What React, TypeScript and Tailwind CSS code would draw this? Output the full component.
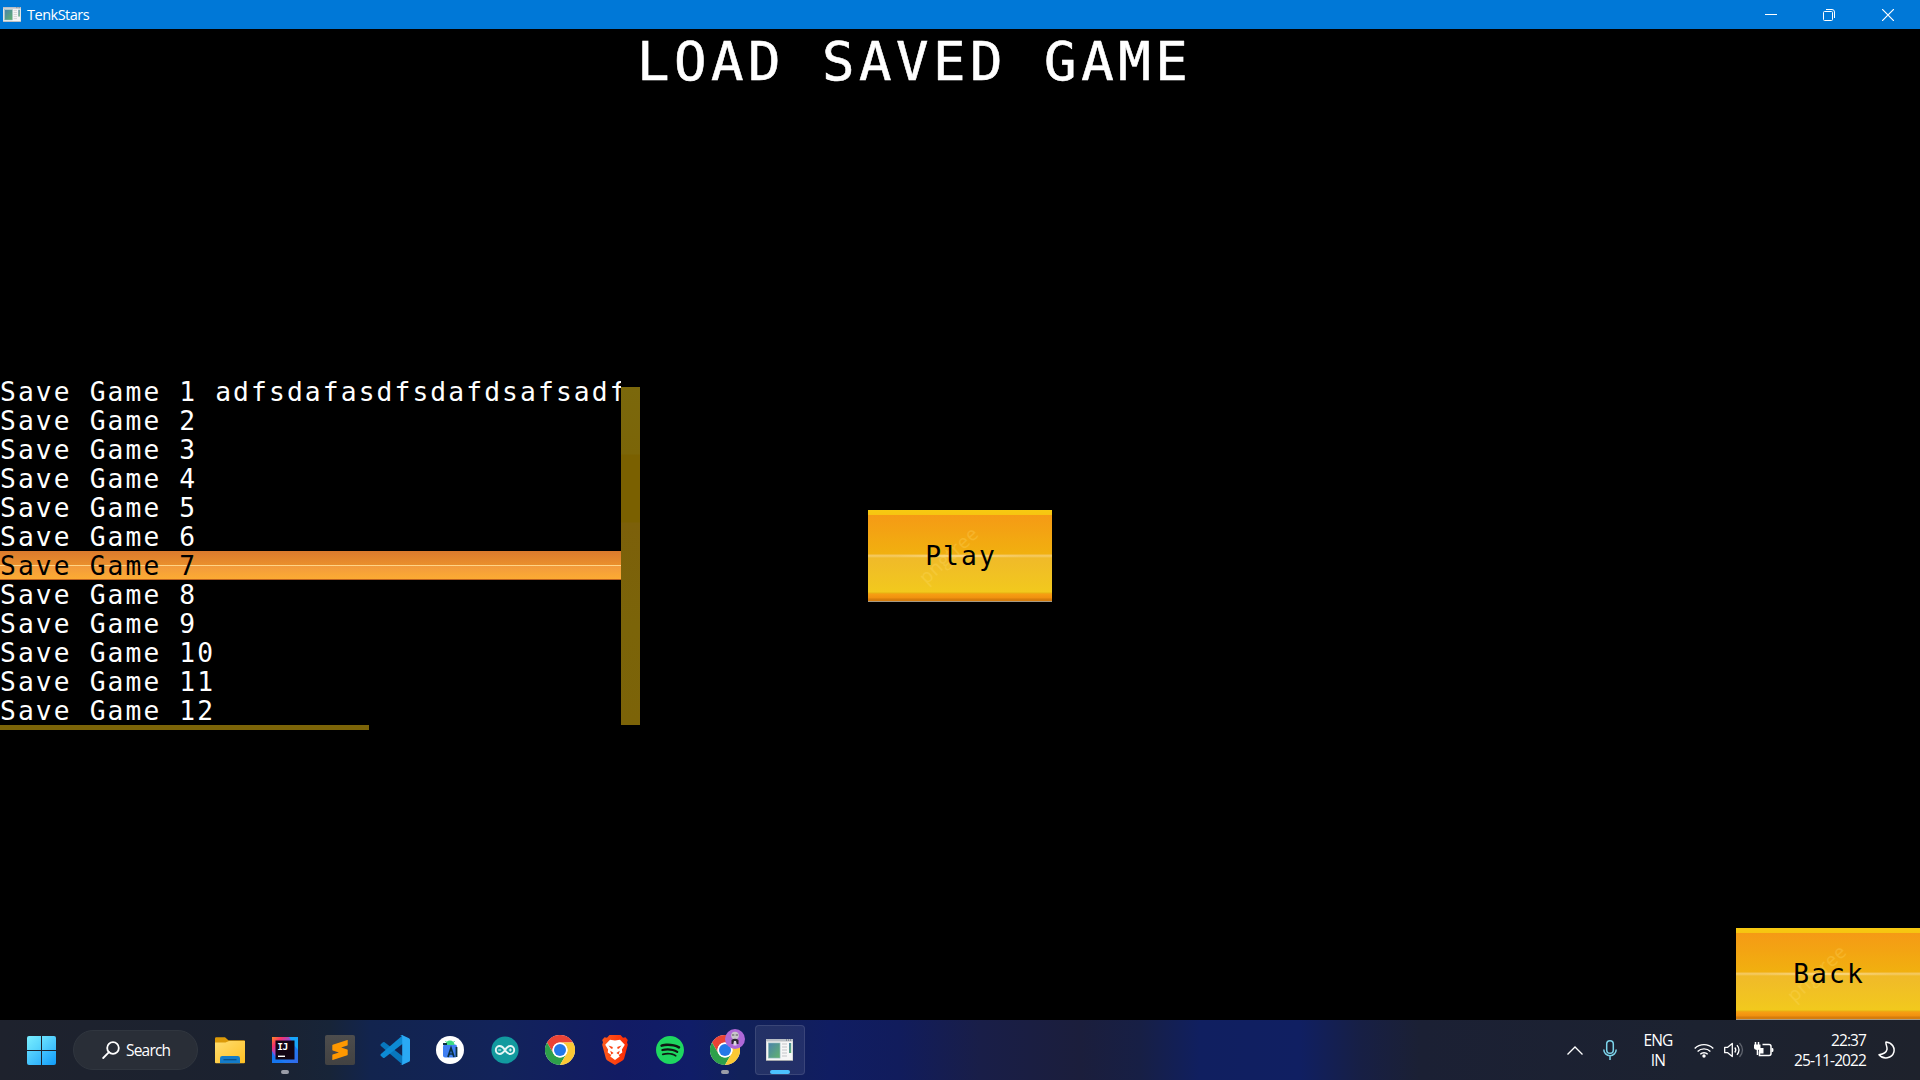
import React from "react";
import { SiSpotify, SiSublimetext } from "react-icons/si";

const saves = [
  "Save Game 1 adfsdafasdfsdafdsafsadfsdaf",
  ...Array.from({ length: 11 }, (_, i) => `Save Game ${i + 2}`),
];

const gameFont = "font-['DejaVu_Sans_Mono',monospace] whitespace-pre text-[26.3px] tracking-[2.1px]";

function GameButton({ label }: { label: string }) {
  return (
    <button className="relative flex h-[92px] w-[184px] items-center justify-center overflow-hidden bg-[linear-gradient(to_bottom,#f7ca12_0px,#f7c410_5px,#f59a15_5px,#f1b00f_44px,#f4c456_45px,#f5cb62_46px,#f0ba29_48px,#f2c91d_82px,#e8b212_83px,#f79e13_84px,#f0900f_88px,#d67d0c_89px,#d67d0c_91px,#a89a84_91px)]">
      <span className="absolute inset-x-0 top-[45px] h-[2px] bg-[linear-gradient(to_right,transparent_15%,#ffe3a2_50%,transparent_85%)] opacity-50" />
      <span className="absolute top-[34px] left-[44px] -rotate-[43deg] font-['Open_Sans',sans-serif] text-[19px] leading-[22px] tracking-[0.5px] text-[#ffdf70]/25">
        pngtree
      </span>
      <span className={`relative -top-[0.5px] left-px leading-[30px] text-black ${gameFont}`}>{label}</span>
    </button>
  );
}

function WindowIcon({ className }: { className: string }) {
  return (
    <svg viewBox="0 0 27 22" className={className} preserveAspectRatio="none">
      <defs>
        <linearGradient id="pane" x1="0" y1="0" x2="1" y2="1">
          <stop offset="0" stopColor="#4a82ad" />
          <stop offset="1" stopColor="#62b36c" />
        </linearGradient>
      </defs>
      <rect width="27" height="22" fill="#d9dadb" />
      <rect x="0" y="0" width="27" height="2" fill="#b9bfc6" />
      <path d="M20 1h1M22 1h1M24 1h1" stroke="#59606b" strokeWidth="1" />
      <rect x="1" y="3" width="25" height="18" fill="#f6f6f6" />
      <rect x="2.5" y="4" width="11.5" height="15" fill="url(#pane)" stroke="#8bb4b7" strokeWidth=".7" />
      <path d="M16 5h5M16 8h5M16 11h5M16 14h5M16 17h5" stroke="#d3d5d7" strokeWidth="1.4" />
      <rect x="23" y="4" width="2.2" height="10" fill="url(#pane)" />
      <path d="M0 21.5h27" stroke="#a3a7ab" />
    </svg>
  );
}

function Chrome() {
  return (
    <svg viewBox="0 0 48 48" className="size-[30px]">
      <circle cx="24" cy="24" r="24" fill="#fff" />
      <path d="M3.2 12A24 24 0 0 1 44.8 12H24a12 12 0 0 0-10.4 18z" fill="#ea4335" />
      <path d="M3.2 12A24 24 0 0 0 24 48L34.4 30a12 12 0 0 1-20.8 0z" fill="#2da04a" />
      <path d="M44.8 12A24 24 0 0 1 24 48l10.4-18A12 12 0 0 0 24 12z" fill="#fcc934" />
      <circle cx="24" cy="24" r="12" fill="#fff" />
      <circle cx="24" cy="24" r="9.6" fill="#2478e8" />
    </svg>
  );
}

function Slot({ children, running }: { children: React.ReactNode; running?: boolean }) {
  return (
    <div className="relative flex h-[60px] w-[55px] shrink-0 items-center justify-center">
      {children}
      {running && <span className="absolute bottom-[6px] left-1/2 h-1 w-2 -translate-x-1/2 rounded-full bg-[#9a9da8]" />}
    </div>
  );
}

function Taskbar() {
  return (
    <footer className="flex h-[60px] shrink-0 items-center bg-[linear-gradient(to_right,#1e222d_0px,#1b2230_260px,#172438_330px,#12244e_370px,#12235a_500px,#121b64_620px,#101d68_690px,#11215a_740px,#12205a_780px,#101d62_830px,#111c5c_900px,#191e48_980px,#1b1e3c_1080px,#171f45_1140px,#101f60_1200px,#101f62_1300px,#171f45_1360px,#1b2034_1420px,#1c2230_1700px,#1e222c_1920px)] font-['Open_Sans',sans-serif] text-white">
      <div className="ml-[27px] grid size-[29px] grid-cols-2 gap-px">
        <i className="rounded-tl-[2px] bg-[linear-gradient(135deg,#79eeff,#4fcffc)]" />
        <i className="rounded-tr-[2px] bg-[linear-gradient(135deg,#6be2ff,#38bafb)]" />
        <i className="rounded-bl-[2px] bg-[linear-gradient(135deg,#5bd6ff,#2eb0fb)]" />
        <i className="rounded-br-[2px] bg-[linear-gradient(135deg,#44c4ff,#119cf8)]" />
      </div>
      <div className="ml-[17px] flex h-10 w-[125px] items-center rounded-full border border-[#30363f] bg-[#292e37] pl-[28px]">
        <svg viewBox="0 0 18 18" className="size-[18px] fill-none stroke-white stroke-[1.8]">
          <circle cx="11" cy="7" r="5.8" />
          <path d="M7 11.2 1.2 17" strokeLinecap="round" />
        </svg>
        <span className="ml-[6px] text-[15.5px] leading-5 tracking-[-0.8px]">Search</span>
      </div>
      <div className="ml-1 flex">
        <Slot>
          <svg viewBox="0 0 30 27" className="h-[27px] w-[30px]">
            <defs>
              <linearGradient id="folder" x1="0" y1="0" x2="1" y2="1">
                <stop stopColor="#ffdd70" />
                <stop offset="1" stopColor="#ffc022" />
              </linearGradient>
            </defs>
            <path d="M0 1.5Q0 .3 1.2.3H10l3.4 2.9H29q1 0 1 1V9H0z" fill="#dc9a08" />
            <path d="M0 5.5h10.5L14 4h16v21.3q0 1-1 1H1q-1 0-1-1z" fill="url(#folder)" />
            <path d="M5 26.3v-5q0-2.3 2.3-2.3h15.4q2.3 0 2.3 2.3v5z" fill="#147cc9" />
            <path d="M8.5 22.7h13" stroke="#064d87" strokeWidth="1.2" />
          </svg>
        </Slot>
        <Slot running>
          <svg viewBox="0 0 26 26" className="size-[26px]">
            <defs>
              <linearGradient id="ij" x1="0" y1="0" x2="1" y2="1">
                <stop stopColor="#ff8a24" />
                <stop offset=".2" stopColor="#f8316b" />
                <stop offset=".4" stopColor="#8a51e0" />
                <stop offset=".6" stopColor="#1a7df6" />
                <stop offset="1" stopColor="#3469ea" />
              </linearGradient>
            </defs>
            <rect width="26" height="26" fill="url(#ij)" />
            <path d="M17 0h9v13l-4-5z" fill="#17a5fb" />
            <path d="M0 14v12h13l-9-5z" fill="#1676ef" />
            <rect x="3.5" y="3.5" width="19" height="19" fill="#120413" />
            <text x="5.2" y="13.2" fontSize="9.5" fontWeight="700" fill="#fff" fontFamily="DejaVu Sans Mono, monospace" letterSpacing="-.4">IJ</text>
            <path d="M6 19.3h7" stroke="#fff" strokeWidth="1.4" />
          </svg>
        </Slot>
        <Slot>
          <div className="flex size-[30px] items-center justify-center rounded-[2px] bg-[linear-gradient(#4d4d4d,#424242)]">
            <SiSublimetext className="size-[20px] text-[#ff9800]" />
          </div>
        </Slot>
        <Slot>
          <svg viewBox="0 0 30 30" className="size-[30px]">
            <path d="m1 9 2-1.8q.8-.6 1.6 0L23 21.5V30L.9 11q-1-1 .1-2z" fill="#0877bd" />
            <path d="m1 21 2 1.8q.8.6 1.6 0L23 8.5V0L.9 19q-1 1 .1 2z" fill="#0d8bd4" />
            <path d="M22 0 29 3.2q1 .5 1 1.5v20.6q0 1-1 1.5L22 30q-1.3.3-2-.5 2.2 1 2.2-1.3V1.8Q22 .2 20 .7 21-.2 22 0z" fill="#2aa9f4" />
          </svg>
        </Slot>
        <Slot>
          <svg viewBox="0 0 28 28" className="size-[28px]">
            <circle cx="14" cy="14" r="14" fill="#fff" />
            <rect x="7" y="8.5" width="14" height="13" rx="2" fill="#3f7ff2" />
            <path d="M9.5 9a4.5 4.5 0 0 1 9 0z" fill="#3bd985" />
            <path d="M10.5 6.5 9.5 5M17.5 6.5l1-1.5" stroke="#3bd985" />
            <path d="M7 8h4M12 21l3-9 3 9M20.5 11v10" fill="none" stroke="#0a3043" strokeWidth="1.8" />
            <path d="M13 18h4" stroke="#0a3043" strokeWidth="1.4" />
          </svg>
        </Slot>
        <Slot>
          <svg viewBox="0 0 28 28" className="size-[28px]">
            <circle cx="14" cy="14" r="13.6" fill="#129a9f" />
            <path d="M14 14c-2-3.2-3.5-4-5.2-4a4 4 0 0 0 0 8c1.7 0 3.2-.8 5.2-4s3.5-4 5.2-4a4 4 0 0 1 0 8c-1.7 0-3.2-.8-5.2-4z" fill="none" stroke="#e4f5f5" strokeWidth="1.9" />
            <path d="M7.2 14h3M17.8 14h3M19.3 12.5v3" stroke="#e4f5f5" strokeWidth="1.1" />
          </svg>
        </Slot>
        <Slot><Chrome /></Slot>
        <Slot>
          <svg viewBox="0 0 26 30" className="h-[30px] w-[26px]">
            <defs>
              <linearGradient id="brave" x1="0" x2="1">
                <stop stopColor="#ff5a1c" />
                <stop offset="1" stopColor="#fb2a05" />
              </linearGradient>
            </defs>
            <path d="M7.5 0h11L21 2.8l2.500-.5L25.800 5l-.8 2.300.8 2.500-3.600 13.400q-.5 1.600-2 2.600L13 30l-7.200-4.200q-1.500-1-2-2.600L.2 9.800 1 7.300.2 5l2.300-2.700 2.500.5z" fill="url(#brave)" />
            <path d="M8 4.800 13 5.600l5-.8 4.800 5-2.900 4.800.4 3-3.600 2.400 1 1.500-4.700 3.500-4.700-3.500 1-1.500-3.600-2.400.4-3L3.200 9.800z" fill="#fff" />
            <path d="M6.500 10.500 10.800 12l-.5 2-1.300-.6zM19.500 10.500 15.200 12l.5 2 1.300-.6zM8.300 15.800l3.300 2.200-2.300 1.600zM17.700 15.800 14.400 18l2.300 1.600z" fill="#fb4010" />
          </svg>
        </Slot>
        <Slot>
          <div className="relative flex size-[28px] items-center justify-center">
            <span className="absolute inset-[3px] rounded-full bg-[#101913]" />
            <SiSpotify className="relative size-[28px] text-[#1ed760]" />
          </div>
        </Slot>
        <Slot running>
          <Chrome />
          <svg viewBox="0 0 20 20" className="absolute top-[9px] left-[28px] size-[20px]">
            <circle cx="10" cy="10" r="10" fill="#ae68d7" />
            <circle cx="10" cy="6.5" r="3.8" fill="#c9c6cb" />
            <path d="M7 6h2.300M10.700 6H13" stroke="#555" strokeWidth="1.2" />
            <path d="M6.500 15V11q3.500-2.500 7 0v4h-2l-.5-3H9l-.5 3z" fill="#2d2933" />
            <path d="M9 12h2l.7 4.500H8.300z" fill="#dbd8de" />
          </svg>
        </Slot>
        <Slot>
          <div className="flex size-[50px] items-center justify-center rounded-[4px] border border-white/10 bg-white/8">
            <WindowIcon className="h-[22px] w-[27px]" />
          </div>
          <span className="absolute bottom-[6px] left-1/2 h-1 w-5 -translate-x-1/2 rounded-full bg-[#4cc2ff]" />
        </Slot>
      </div>
      <div className="ml-auto flex items-center">
        <svg viewBox="0 0 16 9" className="h-[9px] w-4 fill-none stroke-white stroke-[1.3]">
          <path d="M.5 8.5 8 1l7.5 7.5" />
        </svg>
        <svg viewBox="0 0 14 20" className="ml-5 h-5 w-[14px] fill-none stroke-[#7cd3ea] stroke-[1.5]">
          <rect x="3.7" y=".8" width="6.6" height="12.5" rx="3.3" />
          <path d="M.8 9.500a6.200 6.200 0 0 0 12.400 0M7 15.800V20" />
        </svg>
        <div className="ml-[22px] w-[38px] text-center text-[15.5px] leading-5 tracking-[-0.8px]">
          <div>ENG</div>
          <div>IN</div>
        </div>
        <svg viewBox="0 0 20 15" className="ml-[17px] h-[15px] w-5 fill-none stroke-white stroke-[1.4]">
          <path d="M.7 5.500a13.200 13.200 0 0 1 18.600 0M3.600 8.500a9 9 0 0 1 12.800 0M6.300 11.300a5.200 5.200 0 0 1 7.400 0" />
          <circle cx="10" cy="13" r="1.7" fill="white" stroke="none" />
        </svg>
        <svg viewBox="0 0 20 16" className="ml-[10px] h-4 w-5 fill-none stroke-white stroke-[1.3]">
          <path d="M.7 5.300h3L8.300 1.500v13L3.700 10.700h-3zM10.800 5.500q2 2.500 0 5M13 3.200q4 4.800 0 9.600" strokeLinejoin="round" />
          <path d="M15.500 1q6 7 0 14" stroke="#5d626c" />
        </svg>
        <svg viewBox="0 0 20 16" className="ml-[10px] h-4 w-5 fill-none stroke-white stroke-[1.5]">
          <path d="M8.500 2.500H15q2 0 2 2v7q0 2-2 2H5.500v-4" />
          <path d="M17.500 6v4h1q1-.2 1-2t-1-2z" fill="white" stroke="none" />
          <path d="M1.500 0v3M4.500 0v3" />
          <path d="M0 2.500h6.500V6q0 1.700-2.300 2v5H2.700V8Q0 7.700 0 6z" fill="white" stroke="none" />
          <path d="M5 6h4.500v5.500H5z" fill="white" stroke="none" />
        </svg>
        <div className="ml-[14px] w-[78px] text-right text-[15.5px] leading-5 tracking-[-0.9px] whitespace-nowrap">
          <div>22:37</div>
          <div>25-11-2022</div>
        </div>
        <svg viewBox="0 0 17 18" className="mr-[25px] ml-3 h-[18px] w-[17px] fill-none stroke-white stroke-[1.5]">
          <path d="M8 .9C14.500 1.600 17 7 15.800 11.300 14 17.500 5.500 19 1 13.700 5.500 13 8.500 11 9 8.300 9.400 5.500 7.300 3 8 .9z" strokeLinejoin="round" />
        </svg>
      </div>
    </footer>
  );
}

export default function App() {
  return (
    <div className="flex h-[1080px] w-[1920px] flex-col overflow-hidden bg-black">
      <header className="flex h-[29px] shrink-0 items-center bg-[#0078d7] text-white">
        <WindowIcon className="ml-[3px] h-[15px] w-[18px]" />
        <h1 className="ml-[6px] font-['Open_Sans',sans-serif] text-[14.5px] leading-[19px] tracking-[-0.5px]">TenkStars</h1>
        <div className="mr-[26px] ml-auto flex items-center">
          <svg viewBox="0 0 12 12" className="size-3 stroke-white"><path d="M0 5.500h12" /></svg>
          <svg viewBox="0 0 12 12" className="ml-[46px] size-3 fill-none stroke-white">
            <rect x=".5" y="2.5" width="9" height="9" rx="1" />
            <path d="M3 .5h6q2.500 0 2.500 2.500v6" />
          </svg>
          <svg viewBox="0 0 12 12" className="ml-[47px] size-3 stroke-white stroke-[1.2]"><path d="m0 0 12 12M12 0 0 12" /></svg>
        </div>
      </header>
      <main className="flex min-h-0 flex-1 flex-col">
        <h2 className="ml-[637px] h-[64px] font-['DejaVu_Sans_Mono',monospace] text-[54px] leading-[65px] tracking-[4.5px] whitespace-pre text-white [-webkit-text-stroke:0.6px_white]">
          LOAD SAVED GAME
        </h2>
        <div className="mt-[284px] flex h-[353px] items-start">
          <section className="w-[640px]">
            <div className="flex h-[348px]">
              <ul className="w-[621px] overflow-hidden">
                {saves.map((name, i) => (
                  <li
                    key={name}
                    className={`h-[29px] pt-px leading-[29px] ${gameFont} ${
                      i === 6
                        ? "bg-[linear-gradient(to_bottom,#db7a2d_0px,#ea8f2c_14px,#ffd486_14px,#ffd486_15px,#f29a3d_15px,#fcab32_28px,#b9601f_28px)] text-black"
                        : "text-white"
                    }`}
                  >
                    {name}
                  </li>
                ))}
              </ul>
              <div className="mt-[10px] h-[338px] w-[19px] bg-[linear-gradient(#7b680c_0px,#7b6508_67px,#7a6000_68px,#7a6000_135px,#7c600a_136px,#7b6409_240px,#7c6308_338px)]" />
            </div>
            <div className="h-[5px] w-[369px] bg-[#7c6408]" />
          </section>
          <div className="mt-[133px] ml-[228px]">
            <GameButton label="Play" />
          </div>
        </div>
        <div className="mt-auto flex justify-end">
          <GameButton label="Back" />
        </div>
      </main>
      <Taskbar />
    </div>
  );
}
